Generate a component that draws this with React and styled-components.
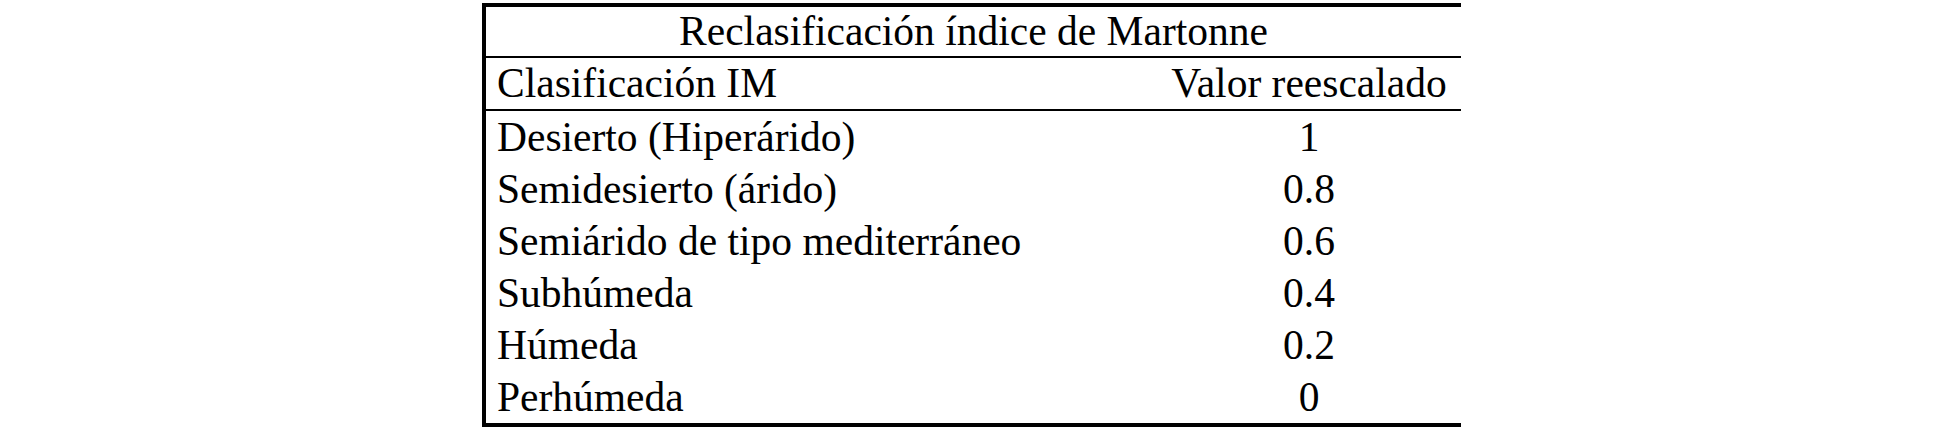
import React from "react";
import styled, { createGlobalStyle } from "styled-components";

const GlobalStyle = createGlobalStyle`
  html, body {
    margin: 0;
    padding: 0;
    background: #ffffff;
  }
  body {
    font-family: "Liberation Serif", "Times New Roman", serif;
    color: #000000;
  }
`;

const Page = styled.div`
  padding: 3px 0 0 482px;
`;

const Table = styled.div`
  width: 975px;
  display: grid;
  grid-template-columns: 671px 304px;
  border-left: 4px solid #000;
  border-top: 4px solid #000;
  border-bottom: 4px solid #000;
  font-size: 41.5px;
`;

const Title = styled.div`
  grid-column: 1 / span 2;
  height: 49px;
  line-height: 49px;
  text-align: center;
  border-bottom: 2px solid #000;
`;

const Cell = styled.div`
  height: ${(p) => (p.$head ? "51px" : "52px")};
  line-height: ${(p) => (p.$head ? "51px" : "52px")};
  padding: 0 ${(p) => (p.$value ? "0" : "11px")};
  text-align: ${(p) => (p.$value ? "center" : "left")};
  border-bottom: ${(p) => (p.$head ? "2px solid #000" : "none")};
  white-space: nowrap;
`;

const rows = [
  ["Desierto (Hiperárido)", "1"],
  ["Semidesierto (árido)", "0.8"],
  ["Semiárido de tipo mediterráneo", "0.6"],
  ["Subhúmeda", "0.4"],
  ["Húmeda", "0.2"],
  ["Perhúmeda", "0"],
];

export default function App() {
  return (
    <>
      <GlobalStyle />
      <Page>
        <Table>
          <Title>Reclasificación índice de Martonne</Title>
          <Cell $head>Clasificación IM</Cell>
          <Cell $head $value>
            Valor reescalado
          </Cell>
          {rows.map(([name, value]) => (
            <React.Fragment key={name}>
              <Cell>{name}</Cell>
              <Cell $value>{value}</Cell>
            </React.Fragment>
          ))}
        </Table>
      </Page>
    </>
  );
}
